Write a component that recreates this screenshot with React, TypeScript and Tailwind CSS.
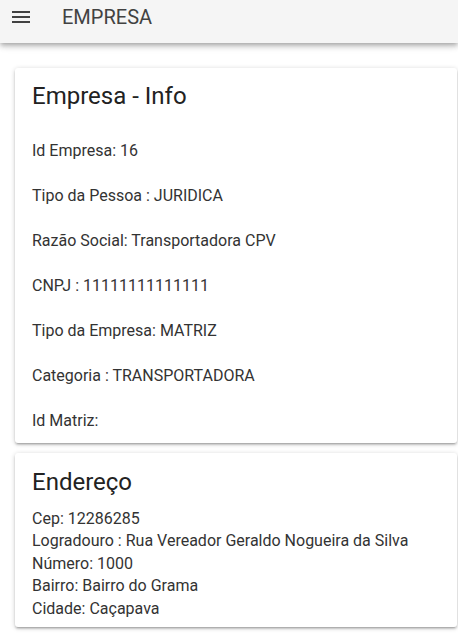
import React from 'react';

const info = [
  'Id Empresa: 16',
  'Tipo da Pessoa : JURIDICA',
  'Razão Social: Transportadora CPV',
  'CNPJ : 11111111111111',
  'Tipo da Empresa: MATRIZ',
  'Categoria : TRANSPORTADORA',
  'Id Matriz:',
];

const endereco = [
  'Cep: 12286285',
  'Logradouro : Rua Vereador Geraldo Nogueira da Silva',
  'Número: 1000',
  'Bairro: Bairro do Grama',
  'Cidade: Caçapava',
];

const cardShadow =
  'shadow-[0_2px_2px_0_rgba(0,0,0,0.14),0_3px_1px_-2px_rgba(0,0,0,0.12),0_1px_5px_0_rgba(0,0,0,0.2)]';

function MenuIcon() {
  return (
    <svg viewBox="0 0 24 24" className="w-6 h-6" fill="#424242">
      <path d="M3 18h18v-2H3v2zm0-5h18v-2H3v2zm0-7v2h18V6H3z" />
    </svg>
  );
}

export default function App() {
  return (
    <div className="min-h-[637px] bg-white font-['Roboto',sans-serif] text-[#333]">
      <header className="h-[43px] bg-[#f5f5f5] shadow-[0_2px_4px_-1px_rgba(0,0,0,0.2),0_4px_5px_0_rgba(0,0,0,0.14),0_1px_10px_0_rgba(0,0,0,0.12)]">
        <div className="flex items-center pt-[3px] pl-[9px]">
          <MenuIcon />
          <h1 className="ml-[29px] text-[20px] leading-7 text-[#424242]">EMPRESA</h1>
        </div>
      </header>

      <main className="pt-[25px] pb-4">
        <section className={`ml-[15px] mr-[1px] rounded-[3px] bg-white pt-[12px] px-[17px] pb-[10px] ${cardShadow}`}>
          <h2 className="text-2xl leading-8 text-[#222] mb-[27px]">Empresa - Info</h2>
          <div className="flex flex-col gap-[21px]">
            {info.map((line) => (
              <p key={line} className="text-base leading-6">
                {line}
              </p>
            ))}
          </div>
        </section>

        <section className={`mt-[10px] ml-[15px] mr-[1px] rounded-[3px] bg-white pt-[13px] px-[17px] pb-[7px] ${cardShadow}`}>
          <h2 className="text-2xl leading-8 text-[#222] mb-[10px]">Endereço</h2>
          <div className="flex flex-col">
            {endereco.map((line) => (
              <p key={line} className="text-base leading-[22.4px]">
                {line}
              </p>
            ))}
          </div>
        </section>
      </main>
    </div>
  );
}
